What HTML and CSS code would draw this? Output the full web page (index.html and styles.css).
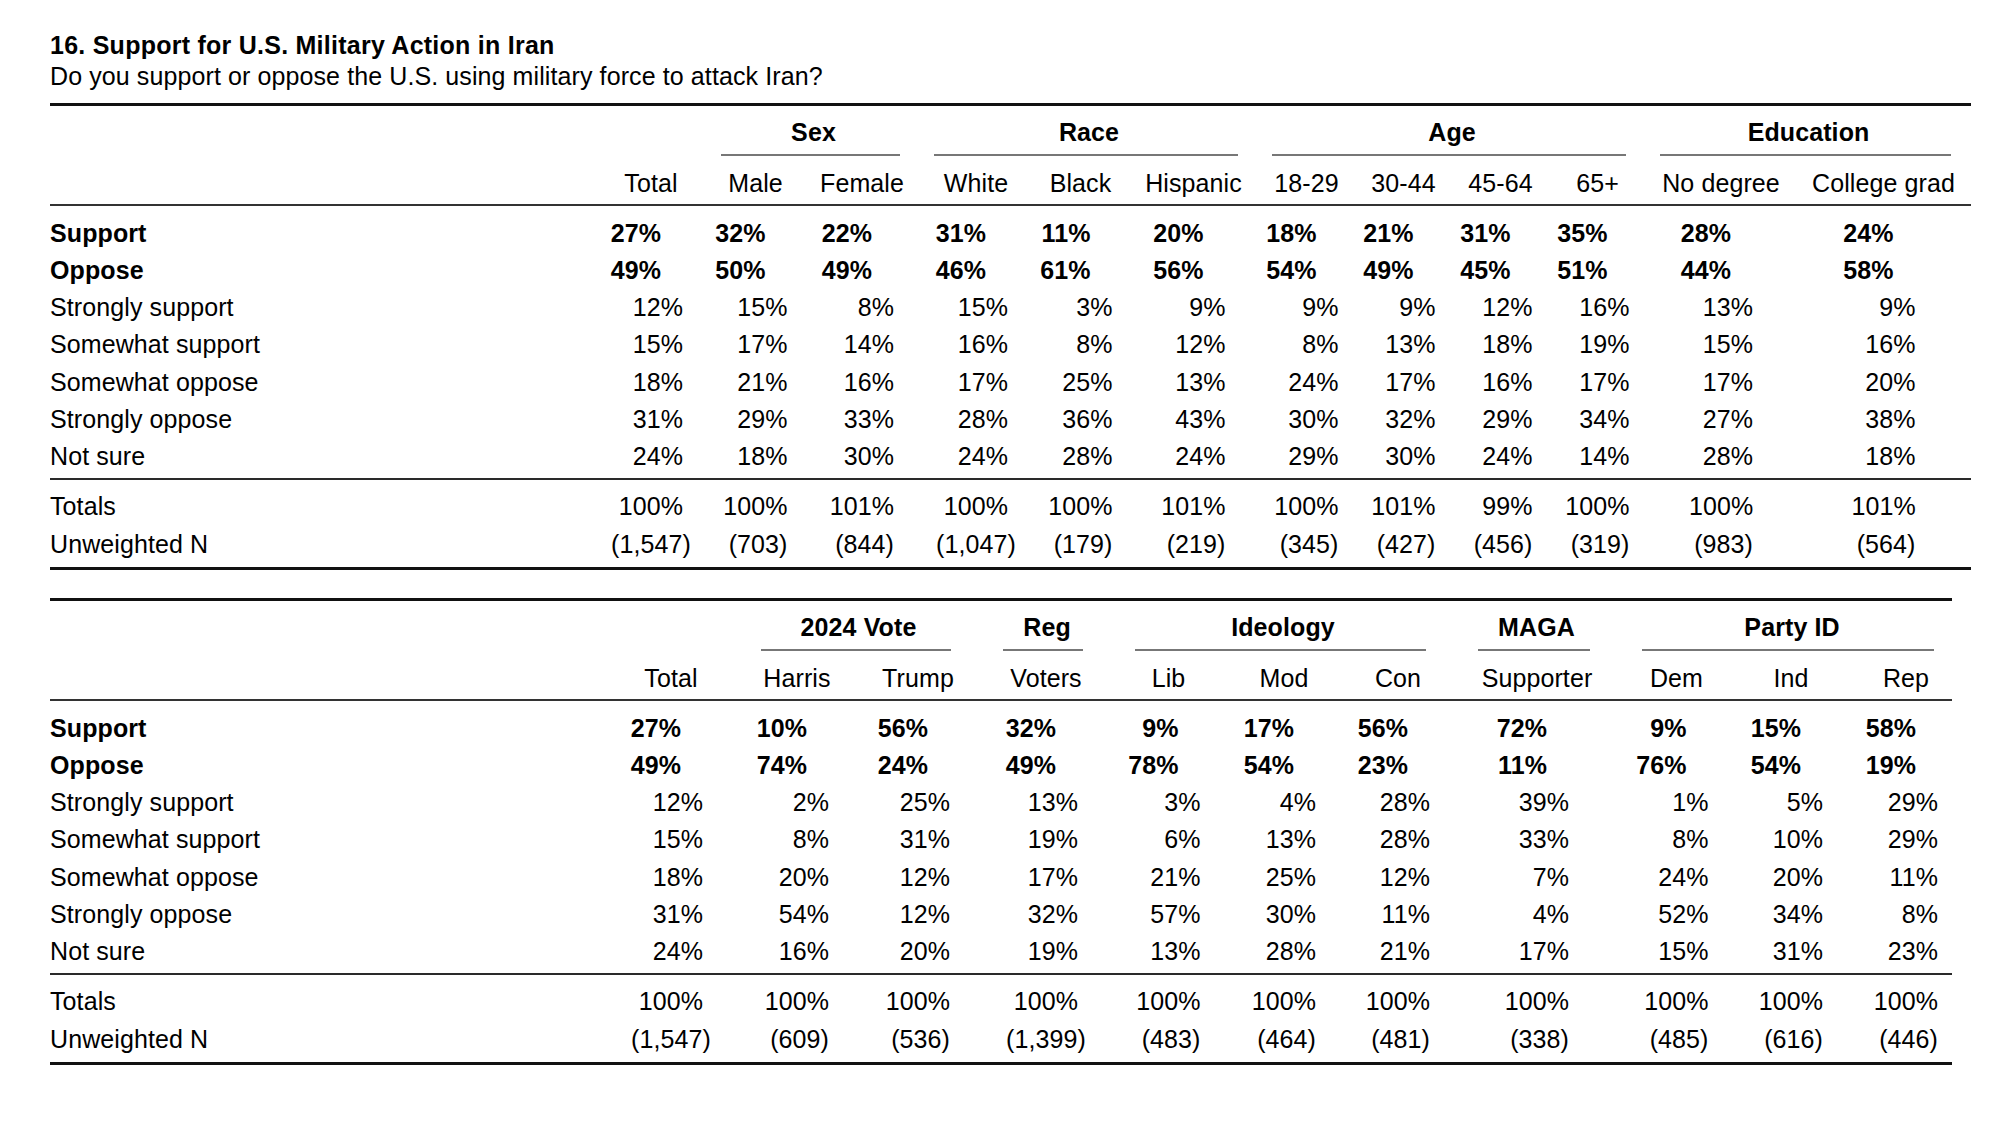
FILE: index.html
```html
<!DOCTYPE html>
<html lang="en">
<head>
<meta charset="utf-8">
<title>16. Support for U.S. Military Action in Iran</title>
<link rel="stylesheet" href="styles.css">
</head>
<body>
<div class="page">
  <h1 class="title">16. Support for U.S. Military Action in Iran</h1>
  <p class="subtitle">Do you support or oppose the U.S. using military force to attack Iran?</p>

  <table class="xt t1">
    <colgroup>
      <col class="c545"><col class="c112"><col class="c97"><col class="c116"><col class="c112"><col class="c97"><col class="c129"><col class="c97"><col class="c97"><col class="c97"><col class="c97"><col class="c150"><col class="c175">
    </colgroup>
    <thead>
      <tr class="grp">
        <th></th><th></th>
        <th colspan="2"><div class="gl">Sex</div></th>
        <th colspan="3"><div class="gl">Race</div></th>
        <th colspan="4"><div class="gl">Age</div></th>
        <th colspan="2"><div class="gl">Education</div></th>
      </tr>
      <tr class="cols">
        <th></th><th>Total</th><th>Male</th><th>Female</th><th>White</th><th>Black</th><th>Hispanic</th><th>18-29</th><th>30-44</th><th>45-64</th><th>65+</th><th>No degree</th><th>College grad</th>
      </tr>
    </thead>
    <tbody>
      <tr class="b first"><td>Support</td><td><span class="v">27%</span></td><td><span class="v">32%</span></td><td><span class="v">22%</span></td><td><span class="v">31%</span></td><td><span class="v">11%</span></td><td><span class="v">20%</span></td><td><span class="v">18%</span></td><td><span class="v">21%</span></td><td><span class="v">31%</span></td><td><span class="v">35%</span></td><td><span class="v">28%</span></td><td><span class="v">24%</span></td></tr>
      <tr class="b"><td>Oppose</td><td><span class="v">49%</span></td><td><span class="v">50%</span></td><td><span class="v">49%</span></td><td><span class="v">46%</span></td><td><span class="v">61%</span></td><td><span class="v">56%</span></td><td><span class="v">54%</span></td><td><span class="v">49%</span></td><td><span class="v">45%</span></td><td><span class="v">51%</span></td><td><span class="v">44%</span></td><td><span class="v">58%</span></td></tr>
      <tr><td>Strongly support</td><td><span class="v">12%</span></td><td><span class="v">15%</span></td><td><span class="v">8%</span></td><td><span class="v">15%</span></td><td><span class="v">3%</span></td><td><span class="v">9%</span></td><td><span class="v">9%</span></td><td><span class="v">9%</span></td><td><span class="v">12%</span></td><td><span class="v">16%</span></td><td><span class="v">13%</span></td><td><span class="v">9%</span></td></tr>
      <tr><td>Somewhat support</td><td><span class="v">15%</span></td><td><span class="v">17%</span></td><td><span class="v">14%</span></td><td><span class="v">16%</span></td><td><span class="v">8%</span></td><td><span class="v">12%</span></td><td><span class="v">8%</span></td><td><span class="v">13%</span></td><td><span class="v">18%</span></td><td><span class="v">19%</span></td><td><span class="v">15%</span></td><td><span class="v">16%</span></td></tr>
      <tr><td>Somewhat oppose</td><td><span class="v">18%</span></td><td><span class="v">21%</span></td><td><span class="v">16%</span></td><td><span class="v">17%</span></td><td><span class="v">25%</span></td><td><span class="v">13%</span></td><td><span class="v">24%</span></td><td><span class="v">17%</span></td><td><span class="v">16%</span></td><td><span class="v">17%</span></td><td><span class="v">17%</span></td><td><span class="v">20%</span></td></tr>
      <tr><td>Strongly oppose</td><td><span class="v">31%</span></td><td><span class="v">29%</span></td><td><span class="v">33%</span></td><td><span class="v">28%</span></td><td><span class="v">36%</span></td><td><span class="v">43%</span></td><td><span class="v">30%</span></td><td><span class="v">32%</span></td><td><span class="v">29%</span></td><td><span class="v">34%</span></td><td><span class="v">27%</span></td><td><span class="v">38%</span></td></tr>
      <tr class="last"><td>Not sure</td><td><span class="v">24%</span></td><td><span class="v">18%</span></td><td><span class="v">30%</span></td><td><span class="v">24%</span></td><td><span class="v">28%</span></td><td><span class="v">24%</span></td><td><span class="v">29%</span></td><td><span class="v">30%</span></td><td><span class="v">24%</span></td><td><span class="v">14%</span></td><td><span class="v">28%</span></td><td><span class="v">18%</span></td></tr>
      <tr class="tot"><td>Totals</td><td><span class="v">100%</span></td><td><span class="v">100%</span></td><td><span class="v">101%</span></td><td><span class="v">100%</span></td><td><span class="v">100%</span></td><td><span class="v">101%</span></td><td><span class="v">100%</span></td><td><span class="v">101%</span></td><td><span class="v">99%</span></td><td><span class="v">100%</span></td><td><span class="v">100%</span></td><td><span class="v">101%</span></td></tr>
      <tr class="n"><td>Unweighted N</td><td><span class="v">(1,547)</span></td><td><span class="v">(703)</span></td><td><span class="v">(844)</span></td><td><span class="v">(1,047)</span></td><td><span class="v">(179)</span></td><td><span class="v">(219)</span></td><td><span class="v">(345)</span></td><td><span class="v">(427)</span></td><td><span class="v">(456)</span></td><td><span class="v">(319)</span></td><td><span class="v">(983)</span></td><td><span class="v">(564)</span></td></tr>
    </tbody>
  </table>

  <table class="xt t2">
    <colgroup>
      <col class="c557"><col class="c128"><col class="c124"><col class="c118"><col class="c132"><col class="c119"><col class="c112"><col class="c112"><col class="c164"><col class="c117"><col class="c114"><col class="c105">
    </colgroup>
    <thead>
      <tr class="grp">
        <th></th><th></th>
        <th colspan="2"><div class="gl s5">2024 Vote</div></th>
        <th><div class="gl s8">Reg</div></th>
        <th colspan="3"><div class="gl s5">Ideology</div></th>
        <th><div class="gl s5">MAGA</div></th>
        <th colspan="3" class="gend"><div class="gl s8">Party ID</div></th>
      </tr>
      <tr class="cols">
        <th></th><th>Total</th><th>Harris</th><th>Trump</th><th>Voters</th><th>Lib</th><th>Mod</th><th>Con</th><th>Supporter</th><th>Dem</th><th>Ind</th><th>Rep</th>
      </tr>
    </thead>
    <tbody>
      <tr class="b first"><td>Support</td><td><span class="v">27%</span></td><td><span class="v">10%</span></td><td><span class="v">56%</span></td><td><span class="v">32%</span></td><td><span class="v">9%</span></td><td><span class="v">17%</span></td><td><span class="v">56%</span></td><td><span class="v">72%</span></td><td><span class="v">9%</span></td><td><span class="v">15%</span></td><td><span class="v">58%</span></td></tr>
      <tr class="b"><td>Oppose</td><td><span class="v">49%</span></td><td><span class="v">74%</span></td><td><span class="v">24%</span></td><td><span class="v">49%</span></td><td><span class="v">78%</span></td><td><span class="v">54%</span></td><td><span class="v">23%</span></td><td><span class="v">11%</span></td><td><span class="v">76%</span></td><td><span class="v">54%</span></td><td><span class="v">19%</span></td></tr>
      <tr><td>Strongly support</td><td><span class="v">12%</span></td><td><span class="v">2%</span></td><td><span class="v">25%</span></td><td><span class="v">13%</span></td><td><span class="v">3%</span></td><td><span class="v">4%</span></td><td><span class="v">28%</span></td><td><span class="v">39%</span></td><td><span class="v">1%</span></td><td><span class="v">5%</span></td><td><span class="v">29%</span></td></tr>
      <tr><td>Somewhat support</td><td><span class="v">15%</span></td><td><span class="v">8%</span></td><td><span class="v">31%</span></td><td><span class="v">19%</span></td><td><span class="v">6%</span></td><td><span class="v">13%</span></td><td><span class="v">28%</span></td><td><span class="v">33%</span></td><td><span class="v">8%</span></td><td><span class="v">10%</span></td><td><span class="v">29%</span></td></tr>
      <tr><td>Somewhat oppose</td><td><span class="v">18%</span></td><td><span class="v">20%</span></td><td><span class="v">12%</span></td><td><span class="v">17%</span></td><td><span class="v">21%</span></td><td><span class="v">25%</span></td><td><span class="v">12%</span></td><td><span class="v">7%</span></td><td><span class="v">24%</span></td><td><span class="v">20%</span></td><td><span class="v">11%</span></td></tr>
      <tr><td>Strongly oppose</td><td><span class="v">31%</span></td><td><span class="v">54%</span></td><td><span class="v">12%</span></td><td><span class="v">32%</span></td><td><span class="v">57%</span></td><td><span class="v">30%</span></td><td><span class="v">11%</span></td><td><span class="v">4%</span></td><td><span class="v">52%</span></td><td><span class="v">34%</span></td><td><span class="v">8%</span></td></tr>
      <tr class="last"><td>Not sure</td><td><span class="v">24%</span></td><td><span class="v">16%</span></td><td><span class="v">20%</span></td><td><span class="v">19%</span></td><td><span class="v">13%</span></td><td><span class="v">28%</span></td><td><span class="v">21%</span></td><td><span class="v">17%</span></td><td><span class="v">15%</span></td><td><span class="v">31%</span></td><td><span class="v">23%</span></td></tr>
      <tr class="tot"><td>Totals</td><td><span class="v">100%</span></td><td><span class="v">100%</span></td><td><span class="v">100%</span></td><td><span class="v">100%</span></td><td><span class="v">100%</span></td><td><span class="v">100%</span></td><td><span class="v">100%</span></td><td><span class="v">100%</span></td><td><span class="v">100%</span></td><td><span class="v">100%</span></td><td><span class="v">100%</span></td></tr>
      <tr class="n"><td>Unweighted N</td><td><span class="v">(1,547)</span></td><td><span class="v">(609)</span></td><td><span class="v">(536)</span></td><td><span class="v">(1,399)</span></td><td><span class="v">(483)</span></td><td><span class="v">(464)</span></td><td><span class="v">(481)</span></td><td><span class="v">(338)</span></td><td><span class="v">(485)</span></td><td><span class="v">(616)</span></td><td><span class="v">(446)</span></td></tr>
    </tbody>
  </table>
</div>
</body>
</html>
```

FILE: styles.css
```css
html, body {
  margin: 0;
  padding: 0;
  background: #ffffff;
  color: #000000;
}

body {
  font-family: "Liberation Sans", Arial, Helvetica, sans-serif;
  font-size: 25px;
  letter-spacing: 0.1px;
}

.page {
  padding: 30px 0 0 50px;
}

.title {
  margin: 0;
  font-size: 25px;
  font-weight: bold;
  line-height: 31px;
  letter-spacing: 0.25px;
}

.subtitle {
  margin: 0;
  line-height: 31px;
}

.xt {
  border-collapse: separate;
  border-spacing: 0;
  table-layout: fixed;
  margin-top: 11px;
}

.t1 { width: 1921px; }
.t2 { width: 1902px; margin-top: 28px; }

.xt th,
.xt td {
  padding: 0;
  font-weight: normal;
  text-align: center;
  white-space: nowrap;
}

.xt td:first-child,
.xt th:first-child {
  text-align: left;
}

/* column widths */
.c545 { width: 545px; }
.c557 { width: 557px; }
.c97 { width: 97px; }
.c105 { width: 105px; }
.c112 { width: 112px; }
.c114 { width: 114px; }
.c116 { width: 116px; }
.c117 { width: 117px; }
.c118 { width: 118px; }
.c119 { width: 119px; }
.c124 { width: 124px; }
.c128 { width: 128px; }
.c129 { width: 129px; }
.c132 { width: 132px; }
.c150 { width: 150px; }
.c164 { width: 164px; }
.c175 { width: 175px; }

/* group header row */
.grp th {
  border-top: 3px solid #111111;
  padding-top: 11px;
  font-weight: bold;
  line-height: 30px;
  vertical-align: top;
}

.t1 .grp th { padding-left: 17px; padding-right: 17px; }
.t2 .grp th { padding-left: 26px; padding-right: 26px; }
.t2 .grp th.gend { padding-right: 18px; }
.xt .grp th:first-child,
.xt .grp th:nth-child(2) { padding-left: 0; padding-right: 0; }

.gl {
  padding-bottom: 7px;
  border-bottom: 2px solid #777777;
}

/* table 1: underline sits 3px left of the centred label */
.t1 .gl {
  margin-left: -3px;
  margin-right: 3px;
  padding-left: 6px;
}

/* table 2: label nudged right of its underline */
.gl.s5 { padding-left: 5px; }
.gl.s8 { padding-left: 8px; }

/* column header row */
.cols th {
  padding-top: 12px;
  padding-bottom: 6px;
  line-height: 30px;
  border-bottom: 2px solid #333333;
}

/* body rows */
.xt tbody td {
  line-height: 37.25px;
}

.first td { padding-top: 8.5px; }
.last td {
  padding-bottom: 2.5px;
  border-bottom: 2px solid #2a2a2a;
}
.tot td { padding-top: 8.5px; }
.n td {
  padding-bottom: 4.25px;
  border-bottom: 3px solid #111111;
}

.b td { font-weight: bold; }

/* value boxes: aligned to the right edge of a centred "100%" */
.v {
  display: inline-block;
  min-width: 64px;
  text-align: right;
}

.b .v {
  min-width: 0;
  width: 64px;
  margin-left: -22px;
  margin-right: 22px;
}

/* table 2 per-column nudges (padding-left = twice the shift) */
.t2 .cols th:nth-child(5),
.t2 tbody td:nth-child(5) { padding-left: 6px; }
.t2 .cols th:nth-child(8),
.t2 tbody td:nth-child(8) { padding-left: 4px; }
.t2 .cols th:nth-child(9),
.t2 tbody td:nth-child(9) { padding-left: 6px; }
.t2 .cols th:nth-child(10),
.t2 tbody td:nth-child(10) { padding-left: 4px; }
.t2 .cols th:nth-child(11),
.t2 tbody td:nth-child(11) { padding-left: 2px; }
.t2 .cols th:last-child,
.t2 tbody td:last-child { padding-left: 13px; }
```
